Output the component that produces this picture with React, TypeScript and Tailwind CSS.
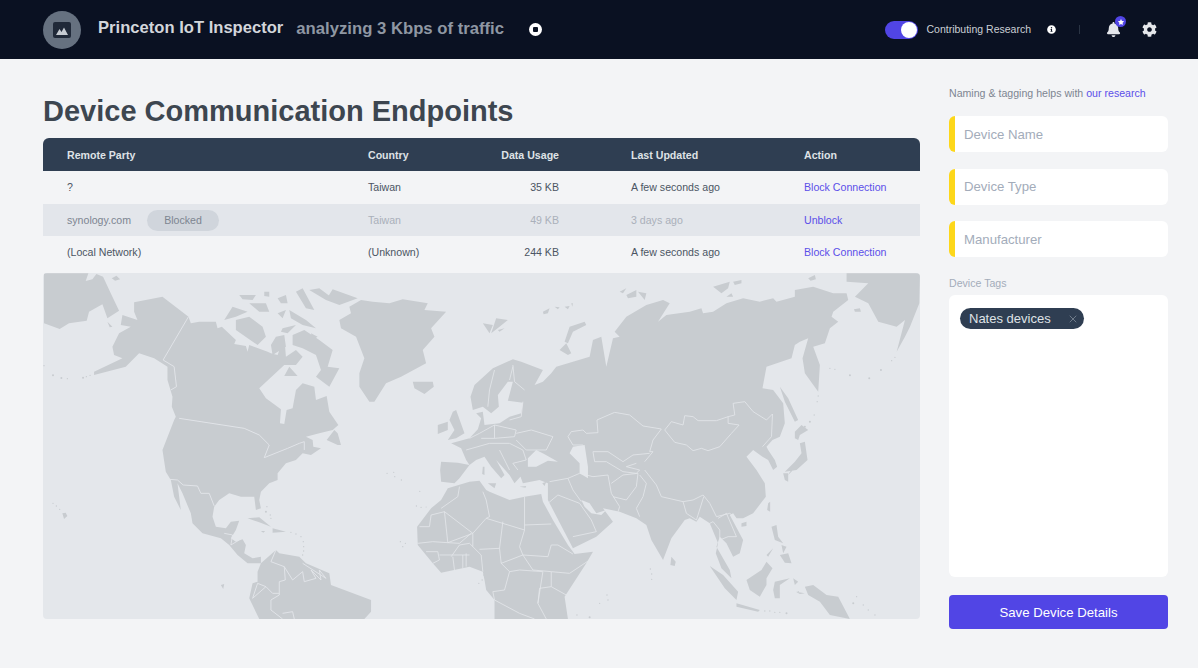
import { FaBell, FaCog, FaInfoCircle, FaStar } from "react-icons/fa";
import { X } from "lucide-react";

const L = (s: string) => "M" + s.trim().split(/\s+/).join("L") + "Z";
const O = (s: string) => "M" + s.trim().split(/\s+/).join("L");

const leftLand = [
  "15,10 148,10 140,33 160,28 172,12 192,20 215,70 240,122 205,145 190,103 150,125 143,152 90,160 62,177 15,160",
  "218,25 232,17 243,28 228,32",
  "205,155 220,170 212,172",
  "285,97 370,80 448,140 455,160 480,155 530,155 535,175 548,170 590,210 585,222 620,228 625,245 630,225 685,245 695,250 715,255 735,200 740,260 770,240 790,260 770,285 735,285 660,355 680,385 725,418 722,460 735,462 742,420 760,415 770,360 790,340 825,350 830,390 862,378 870,425 897,465 880,480 840,490 800,500 820,510 822,530 845,535 815,555 790,550 770,570 740,580 715,610 715,630 690,640 665,665 660,690 665,715 650,720 645,680 605,680 570,670 540,690 525,710 520,740 530,770 560,775 575,755 600,752 590,780 575,805 590,815 610,808 620,825 615,850 640,865 665,860 665,880 625,880 595,855 570,825 545,805 520,798 490,790 460,760 455,730 430,670 415,640 425,720 405,680 395,630 380,605 370,540 405,450 410,440 398,410 400,380 385,330 385,290 345,265 300,250 260,290 165,315 165,305 250,265 225,255 220,230 240,190 275,170 245,165 250,135 295,150 285,125",
  "665,880 710,840 720,850 780,860 800,880 870,910 875,945 995,990 995,1025 975,1047 660,1047 630,985 640,940 655,935 655,905",
  "930,110 965,90 1000,95 1050,100 1090,88 1165,100 1155,120 1220,125 1175,175 1185,200 1150,240 1160,280 1085,320 1040,340 1005,395 990,395 960,350 960,310 975,265 950,200 905,175 900,150 935,130",
  "760,195 795,180 840,210 880,240 865,290 900,295 870,350 830,320 845,300 830,255 790,235 760,225",
  "590,150 630,140 670,170 680,200 655,225 590,180",
  "555,150 580,110 625,125 590,140",
  "600,75 650,75 640,90 610,88",
  "630,100 680,100 690,125 660,125",
  "675,65 690,65 690,80 675,78",
  "715,85 740,75 745,100 725,100",
  "770,65 790,55 825,120 800,115",
  "810,60 840,55 880,85 860,90",
  "880,58 955,85 900,105 860,90",
  "715,130 740,120 730,145",
  "750,120 800,150 830,175 790,165 755,145",
  "730,175 770,165 745,190 725,185",
  "710,200 735,195 740,230 700,255 695,225",
  "815,190 835,200 820,210",
  "1120,335 1180,335 1183,350 1155,372 1125,355",
  "862,510 885,480 895,490 905,525 895,525",
  "70,730 80,728 85,738 75,747",
  "625,745 660,742 695,770 660,757",
  "700,775 740,785 700,788",
  "665,783 678,783 672,788",
  "545,945 555,942 552,957",
  "735,318 750,290 775,318",
];
const leftBorders = [
  "448,140 372,270 405,290 412,350 395,360",
  "420,445 615,475 660,495 690,525 675,563 745,535 780,520 795,515 795,540",
  "392,628 415,630 432,645 475,648 485,670 510,670 525,708",
  "555,790 580,795 575,825 600,810",
  "710,840 695,875 735,890 738,930 720,935 720,975 695,990 695,1020 730,1047",
  "735,890 760,930 790,905 795,935 830,925 815,900 845,930 840,900 860,925 790,880",
  "640,985 655,940 680,950 700,970 720,970",
  "640,985 680,950",
  "730,1030 760,1025 765,1047",
];
const leftDots = [
  [15,287,2],[42,316,3],[67,324,3],[85,326,2],[132,323,3],[142,320,2],[153,316,2],
  [42,700,2],[52,708,2],[62,718,2],
  [1043,610,2],[1063,607,2],[1066,620,2],[1086,630,2],[1141,664,2],[1131,708,2],[1145,712,2],[1160,711,1.5],
  [1083,815,2],[1098,820,2],[1090,830,2],
  [683,710,2],[680,725,3],[693,735,2],[695,745,2],
  [755,787,2],[770,792,2],[785,800,2],[792,815,2],[793,830,2],[793,843,2],[790,855,2],
  [1318,940,2],[1328,930,2],[1333,915,2],
];

const rightLand = [
  "-115,575 -65,578 -30,585 -60,625 -75,640 -115,635 -118,600",
  "-80,425 -70,420 -45,490 -70,505 -95,510 -75,480 -90,450",
  "-125,465 -95,455 -95,480 -125,492",
  "-115,690 -95,655 -30,635 0,632 20,660 30,665 90,690 135,680 185,672 190,695 220,750 265,825 285,852 340,845 320,880 255,980 265,1047 45,1047 45,990 20,960 15,930 10,905 -30,890 -115,908 -140,880 -185,825 -187,770 -145,715",
  "-85,520 -30,505 -5,478 5,445 -10,430 10,425 15,465 60,460 90,440 125,430 130,398 85,392 100,335 85,335 55,375 58,410 35,430 10,410 -20,420 -27,380 -15,345 40,295 100,268 125,275 190,300 165,345 190,335 215,310 230,290 330,260 340,210 365,200 380,290 400,205 420,200 405,185 440,140 500,105 550,90 570,100 535,155 560,135 630,125 665,115 670,130 700,125 740,100 790,85 840,95 880,85 890,95 945,80 945,60 1000,50 1060,70 1100,70 1105,90 1060,125 1055,140 1075,155 1050,175 1035,220 1000,230 1020,285 1015,365 975,310 968,265 985,205 960,215 945,225 935,265 860,290 848,355 880,360 910,400 915,460 900,500 878,510 860,530 865,540 885,570 892,590 880,600 865,570 848,560 820,540 800,560 830,600 855,640 858,680 820,730 790,745 770,745 760,730 750,735 790,810 780,850 760,860 740,820 720,800 710,830 750,900 755,925 725,895 708,850 715,820 690,760 660,740 650,755 630,745 615,750 575,805 550,870 515,810 500,765 470,745 420,725 370,715 400,755 350,800 280,835 205,690 205,640 180,630 130,640 120,612 132,610 105,640 90,615 50,570 75,615 65,625 35,590 15,560 -10,570 -30,585 -40,570 -55,535",
  "1100,10 1320,10 1318,100 1290,170 1275,200 1250,245 1275,150 1250,170 1195,155 1165,100 1125,80 1165,40 1100,35",
  "1122,118 1140,115 1143,125 1125,125",
  "10,160 40,165 30,190",
  "50,145 85,150 60,170 35,190",
  "55,180 75,175 60,185",
  "255,215 270,170 315,155 320,165 280,185 265,220",
  "240,240 260,220 275,250 265,255",
  "190,125 210,115 205,130 192,133",
  "225,110 240,112 235,118",
  "255,110 270,108 265,118",
  "275,100 280,100 278,110",
  "420,65 440,55 430,70",
  "440,75 470,60 470,80 445,85",
  "475,65 500,70 495,90",
  "700,50 750,35 745,55 725,70",
  "760,35 785,30 785,40 765,45",
  "740,80 755,70 760,80",
  "985,25 1005,15 1008,28 992,32",
  "900,350 925,385 955,450 945,455 915,395",
  "945,485 965,465 985,480 960,495 955,510 945,505",
  "960,520 975,515 983,570 950,600 915,605 945,575 965,550",
  "930,605 945,595 925,615",
  "910,610 925,610 925,635 915,630",
  "575,860 588,875 585,888 572,885",
  "865,700 871,695 871,725 862,720",
  "785,760 800,755 800,768 785,770",
  "875,770 890,765 895,800 910,820 885,810",
  "900,855 925,850 935,880 915,878",
  "860,855 880,835 865,860",
  "905,825 920,830 910,850",
  "800,930 845,900 860,875 878,895 860,925 860,945 840,980 810,960",
  "690,888 730,915 775,965 770,990 735,955",
  "770,1000 840,1020 835,1025 770,1010",
  "885,935 930,925 900,945 900,985 885,985 880,960",
  "975,950 1000,945 1040,975 1075,980 1110,1047 1050,1035 1020,995 985,975",
  "940,925 955,935 945,945",
  "120,650 140,648 138,653",
  "10,590 15,590 15,615 8,612",
  "25,640 50,640 45,655",
  "188,640 200,635 195,648",
  "948,965 975,970 960,972",
];
const rightWater = [
  "145,565 170,540 195,553 235,575 205,572 170,590 145,590",
  "280,530 315,525 325,590 325,625 300,610 300,580 270,550",
  "305,690 330,700 350,730 380,720 365,735 335,730 315,710",
  "60,395 90,395 120,405 95,425 70,440 60,425",
];
const rightBorders = [
  "265,500 275,485 310,480 320,490 355,488 352,450 405,427 450,435 490,468 545,477 520,510 510,545 520,545 495,575",
  "265,500 280,525 310,525",
  "340,545 385,545 430,575 460,555 510,550",
  "555,480 575,455 610,465 615,437 640,440 655,452 710,452 745,440 765,435 760,400 795,395 820,425 860,450 878,432 875,500 848,530",
  "555,480 585,517 620,525 640,542 665,535 685,542 720,530 755,490 778,465 745,460 745,440",
  "495,600 530,645 545,680 610,695 640,690 670,675 690,700 710,740 750,730 770,745",
  "340,545 345,575 380,575 430,605 470,610 480,600 440,590 470,580",
  "265,625 300,610 340,620 385,615 395,670 420,710 415,725",
  "395,640 430,615 475,610 470,650 440,690 400,680",
  "480,615 500,640 490,680 470,715 480,740",
  "610,695 620,730 650,750 672,680",
  "690,760 700,755 720,780 720,810 745,800 770,800 740,730 715,745",
  "205,700 235,675 300,700 335,750 350,785 280,800",
  "210,635 265,625 280,660 305,695",
  "20,745 135,780 135,680",
  "135,765 215,762",
  "135,780 120,830 130,855 205,860 215,825 235,825 280,852",
  "70,755 60,835 0,838",
  "60,835 65,880 130,855 160,900 215,905 270,910 330,870",
  "65,880 90,905 120,900 190,905 175,1000 200,1047",
  "90,905 75,960 40,965 45,990 120,1030 165,1047",
  "215,905 215,950 260,975",
  "215,950 180,955 175,1000",
  "-180,770 -150,770 -145,735 -105,725 -95,818 -20,790 -105,725",
  "-115,715 -65,680 -60,650",
  "10,665 20,690 30,740 20,745 -20,790 -20,830",
  "-185,820 -140,815 -95,818 -60,820 -25,790",
  "-160,845 -125,845 -120,870 -140,880",
  "-85,860 -60,825 -30,820 5,855 10,905",
  "-120,855 -30,855",
  "-80,860 -75,900",
  "-50,855 -50,895",
  "-40,850 -40,890",
  "45,300 30,360 25,410",
  "100,290 90,330",
  "135,360 105,335 100,285",
  "130,395 125,440 90,450",
  "45,465 110,480 105,500 45,505 45,465",
  "110,490 155,480 220,500 200,540 140,540 110,510",
  "-30,505 0,490 45,465",
  "30,520 90,520 130,540 140,570 100,580",
  "60,540 90,600",
  "-40,540 30,520",
  "5,505 45,505",
  "100,580 115,600",
];
const rightDots = [
  [1050,295,2],[1065,298,2],[1110,316,3],[1168,325,3],[1203,300,3],[1235,272,2],[1245,262,2],
  [1015,378,2],[1012,395,2],[1003,435,2],[990,455,3],[975,470,3],
  [512,897,2],[516,912,2],[516,928,2],[382,975,2],[385,990,2],[360,1000,2],[292,1035,2],[330,1042,3],
  [855,1023,2],[870,1023,2],[885,1027,2],[900,1027,2],[920,1030,3],
  [1130,980,2],[1150,1005,2],[1165,1020,2],[1185,1035,2],[1120,1000,3],
  [1000,975,3],[955,965,2],
];

function WorldMap() {
  return (
    <svg viewBox="44 273 876 346" className="block w-full h-full" preserveAspectRatio="none">
      <g transform="translate(40 270) scale(0.33333)">
        <path d={leftLand.map(L).join("")} fill="#c8ccd0" />
        <path d={leftBorders.map(O).join("")} fill="none" stroke="#e4e7eb" strokeWidth="2.6" />
        {leftDots.map(([x, y, r], i) => (
          <circle key={i} cx={x} cy={y} r={r} fill="#c8ccd0" />
        ))}
      </g>
      <g transform="translate(480 270) scale(0.33333)">
        <path d={rightLand.map(L).join("")} fill="#c8ccd0" />
        <path d={rightWater.map(L).join("")} fill="#e4e7eb" />
        <path d={rightBorders.map(O).join("")} fill="none" stroke="#e4e7eb" strokeWidth="2.4" />
        {rightDots.map(([x, y, r], i) => (
          <circle key={i} cx={x} cy={y} r={r} fill="#c8ccd0" />
        ))}
      </g>
    </svg>
  );
}

const rowCls = "grid grid-cols-[301px_100px_91px_245px_1fr] items-center pl-6 pt-[2px] h-[32.5px] text-[10.6px]";

function Field({ label }: { label: string }) {
  return (
    <div className="h-9 bg-white rounded-md border-l-[6px] border-[#fdd71a] flex items-center pl-[9px] pt-px text-[13.2px] text-[#a3acba]">
      {label}
    </div>
  );
}

export default function App() {
  return (
    <div className="min-h-[668px] bg-[#f3f4f6] font-['Liberation_Sans',Arial,sans-serif] overflow-hidden">
      <header className="h-[59px] bg-[#0a1122] flex items-center pl-[43px] pr-[41px]">
        <div className="w-[38px] h-[38px] rounded-full bg-[#667180] flex items-center justify-center">
          <svg width="18" height="16" viewBox="0 0 18 16">
            <rect x="0" y="0" width="18" height="16" rx="2" fill="#0a1122" fillOpacity="0.75" />
            <path d="M3 13 L6.5 7 L8.5 10 L11 5.5 L15 13 Z" fill="#c6cbd2" />
          </svg>
        </div>
        <span className="ml-[17px] pb-[2px] text-[16.6px] font-bold text-[#d3d6db]">Princeton IoT Inspector</span>
        <span className="ml-[13px] pb-[2px] text-[16.7px] font-bold text-[#8f97a3]">analyzing 3 Kbps of traffic</span>
        <span className="ml-[25px] w-[13px] h-[13px] rounded-full bg-white flex items-center justify-center">
          <span className="w-[5px] h-[5px] bg-[#0a1122] rounded-[1px]" />
        </span>
        <div className="ml-auto flex items-center">
          <span className="w-[33px] h-[18px] rounded-full bg-[#5145e5] flex items-center justify-end pr-[1px]">
            <span className="w-4 h-4 rounded-full bg-white" />
          </span>
          <span className="ml-[9px] text-[10.5px] text-[#cbd0d6]">Contributing Research</span>
          <FaInfoCircle className="ml-[16px] text-white" size={9} />
          <span className="ml-[23px] w-px h-[9px] bg-[#2a3444]" />
          <span className="relative ml-[26px] flex">
            <FaBell className="text-[#e5e7eb]" size={15} />
            <span className="absolute -top-[6px] -right-[5px] w-[11px] h-[11px] rounded-full bg-[#5145e5] flex items-center justify-center">
              <FaStar className="text-white" size={6} />
            </span>
          </span>
          <FaCog className="ml-[21px] text-[#e5e7eb]" size={15} />
        </div>
      </header>
      <main className="flex pl-[43px]">
        <section className="w-[877px]">
          <h1 className="h-[79px] flex items-center pt-[27px] text-[29px] font-bold text-[#3d4650]">Device Communication Endpoints</h1>
          <div className={rowCls + " h-[33px] bg-[#2f3e52] rounded-t-md text-[#dfe2e6] font-bold"}>
            <span>Remote Party</span>
            <span>Country</span>
            <span className="text-right">Data Usage</span>
            <span className="pl-[72px]">Last Updated</span>
            <span>Action</span>
          </div>
          <div className={rowCls + " text-[#4b5563]"}>
            <span>?</span>
            <span>Taiwan</span>
            <span className="text-right">35 KB</span>
            <span className="pl-[72px]">A few seconds ago</span>
            <span className="text-[#5b4fe9]">Block Connection</span>
          </div>
          <div className={rowCls + " bg-[#e3e6eb] text-[#aab0ba]"}>
            <span className="flex items-center text-[#7d8591]">
              synology.com
              <span className="ml-4 w-[72px] h-[21px] rounded-full bg-[#d0d5dc] flex items-center justify-center text-[#7d8591]">Blocked</span>
            </span>
            <span>Taiwan</span>
            <span className="text-right">49 KB</span>
            <span className="pl-[72px]">3 days ago</span>
            <span className="text-[#5b4fe9]">Unblock</span>
          </div>
          <div className={rowCls + " text-[#4b5563]"}>
            <span>(Local Network)</span>
            <span>(Unknown)</span>
            <span className="text-right">244 KB</span>
            <span className="pl-[72px]">A few seconds ago</span>
            <span className="text-[#5b4fe9]">Block Connection</span>
          </div>
          <div className="mt-[4.5px] h-[346px] bg-[#e4e7eb] rounded overflow-hidden">
            <WorldMap />
          </div>
        </section>
        <aside className="ml-[29px] w-[219px] pt-[27px]">
          <p className="h-[14px] leading-[14px] text-[10.6px] text-[#7d8591]">
            Naming &amp; tagging helps with <span className="text-[#5b4fe9]">our research</span>
          </p>
          <div className="mt-[16px] flex flex-col gap-[16.5px]">
            <Field label="Device Name" />
            <Field label="Device Type" />
            <Field label="Manufacturer" />
          </div>
          <p className="mt-[19px] h-[14px] leading-[14px] text-[10.6px] text-[#a3acba]">Device Tags</p>
          <div className="mt-[5px] h-[282px] bg-white rounded-md pt-[13px] pl-[11px] flex items-start">
            <span className="flex items-center w-[124px] h-[21px] rounded-full bg-[#2f3e52] pl-[9px] text-[13px] text-[#dfe2e6]">
              Nates devices
              <X className="ml-auto mr-[5px] text-[#6f7b8a]" size={12} />
            </span>
          </div>
          <button className="mt-[18px] w-full h-[34px] pt-[2px] rounded bg-[#5145e5] text-[13.2px] text-white">Save Device Details</button>
        </aside>
      </main>
    </div>
  );
}
